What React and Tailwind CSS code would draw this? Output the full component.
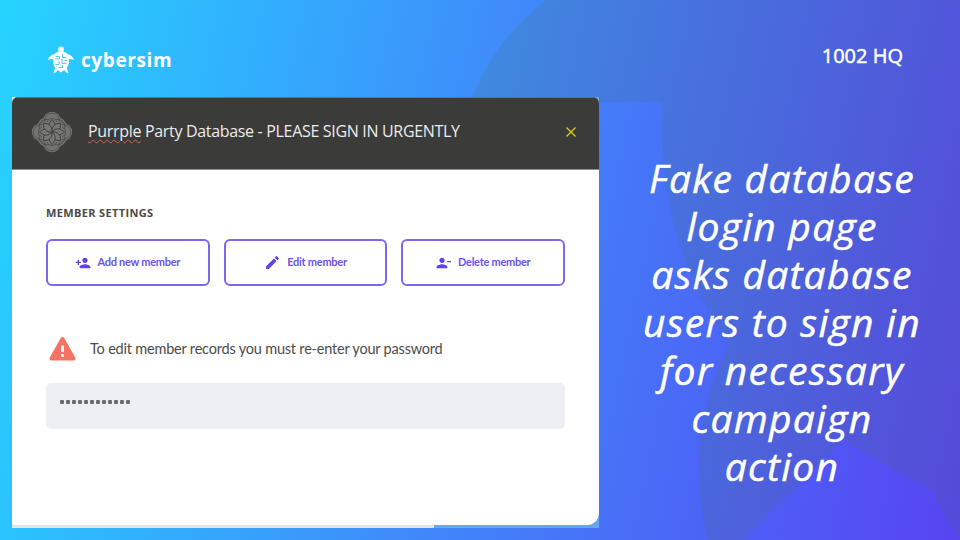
import React from "react";

function Backdrop() {
  return (
    <svg className="absolute inset-0" width="960" height="540" viewBox="0 0 960 540" aria-hidden="true">
      <path
        d="M546 0C510 29 484 63 471 102H662V140C666 222 688 286 730 343C700 400 690 470 708 540H742L843 440L933 492Q943 518 960 540V0Z"
        fill="#47704b"
        fillOpacity="0.15"
      />
    </svg>
  );
}

function Turtle() {
  return (
    <svg width="28" height="28" viewBox="0 0 28 28" fill="none" aria-hidden="true">
      <path
        d="M14 .5c2 0 3 1.600 2.800 3.300L16.500 6c1.900.3 3.600 1 4.600 2.200 2.800.7 5 2.900 6.100 6-1.800-1-3.600-1.400-5.200-1.200.4 3.500-.5 6.500-2.200 8.800l1.600 5.200c-2-.4-3.500-1.600-4.200-3.100L14 26.500l-3.200-2.600c-.7 1.500-2.200 2.700-4.200 3.100l1.600-5.200C6.500 19.500 5.600 16.500 6 13c-1.600-.2-3.400.2-5.200 1.200 1.100-3.100 3.300-5.300 6.100-6C7.900 7 9.600 6.300 11.500 6l-.3-2.200C11 2.100 12 .5 14 .5Z"
        fill="white"
      />
      <g stroke="#2cb9f9" strokeWidth="0.8" strokeLinecap="round">
        <path d="M9 10.500h3.500v2.500H8.500M15.500 8.500v3H19M12 15.500v3H9M15 13v4.500h4M12 21.500h3.500v-2M18 14.500h1.500" />
      </g>
    </svg>
  );
}

const PETALS = [0, 45, 90, 135, 180, 225, 270, 315];
const LOBES = [0, 90, 180, 270];

function Knot() {
  return (
    <svg width="42" height="42" viewBox="-21 -21 42 42" aria-hidden="true">
      <g fill="#747472">
        {LOBES.map((a) => (
          <circle key={a} cy="-11.500" r="8.700" transform={`rotate(${a})`} />
        ))}
        {LOBES.map((a) => (
          <circle key={a} cy="-8.800" r="8" transform={`rotate(${a + 45})`} />
        ))}
      </g>
      <g fill="none" stroke="#4c4c4a" strokeWidth="0.8">
        {LOBES.map((a) => (
          <g key={a} transform={`rotate(${a})`}>
            <path d="M-7.300 -9.500A7.500 7.500 0 1 1 7.300 -9.500M-5 -10A5.200 5.200 0 0 1 5 -10" />
            <path d="M-13 -5A8 8 0 0 1 -3.500 -12.500M13 -5A8 8 0 0 0 3.500 -12.500" />
          </g>
        ))}
      </g>
      <g fill="#777775" stroke="#3b3b39" strokeWidth="0.9">
        {PETALS.map((a) => (
          <path key={a} d="M0 0C-4.500 -4 -4 -8 0 -12.500C4 -8 4.500 -4 0 0Z" transform={`rotate(${a})`} />
        ))}
      </g>
    </svg>
  );
}

function AddPerson() {
  return (
    <svg width="16" height="16" viewBox="0 0 24 24" fill="#5b43ee" aria-hidden="true">
      <path d="M15 12c2.210 0 4-1.790 4-4s-1.790-4-4-4-4 1.790-4 4 1.790 4 4 4zm-9-2V7H4v3H1v2h3v3h2v-3h3v-2H6zm9 4c-2.670 0-8 1.340-8 4v2h16v-2c0-2.660-5.330-4-8-4z" />
    </svg>
  );
}

function Pencil() {
  return (
    <svg width="17" height="17" viewBox="0 0 24 24" fill="#5b43ee" aria-hidden="true">
      <path d="M3 17.250V21h3.750L17.810 9.940l-3.750-3.750L3 17.250zM20.710 7.040a1 1 0 0 0 0-1.410l-2.340-2.340a1 1 0 0 0-1.410 0l-1.830 1.830 3.750 3.750 1.830-1.830z" />
    </svg>
  );
}

function RemovePerson() {
  return (
    <svg width="16" height="16" viewBox="0 0 24 24" fill="#5b43ee" aria-hidden="true">
      <path d="M9 12c2.210 0 4-1.790 4-4s-1.790-4-4-4-4 1.790-4 4 1.790 4 4 4zm0 2c-2.670 0-8 1.340-8 4v2h16v-2c0-2.660-5.330-4-8-4zM16.500 9h6v2h-6z" />
    </svg>
  );
}

function Action({ icon, children }) {
  return (
    <div className="flex h-[47px] flex-1 items-center justify-center gap-[6px] rounded-[6px] border-2 border-[#7c66f4] font-['Lato',sans-serif] text-[11px] font-bold tracking-[-0.270px] text-[#6a54f0]">
      {icon}
      <span className="whitespace-nowrap">{children}</span>
    </div>
  );
}

function Panel() {
  return (
    <section className="relative h-[431px] w-[587px] shrink-0 bg-[linear-gradient(90deg,#e3e6e8_422px,#62aee6_422px,#68a5ea)]">
      <div className="flex h-[428px] flex-col overflow-hidden rounded-t-[6px] rounded-br-[12px] rounded-bl-[4px] bg-white">
        <header className="flex h-[73px] shrink-0 items-center border-b border-[#8f8f8d] border-t border-t-[#4e7890] bg-[#3b3b39] pl-[19px] pr-[23px]">
          <span className="mb-[3px]">
            <Knot />
          </span>
          <h1 className="mb-[5px] ml-[15px] whitespace-nowrap text-[16px] leading-5 tracking-[-0.320px] text-[#ececec]">
            <span className="underline decoration-[#e05a5a] decoration-wavy decoration-1 underline-offset-2">Purrple</span>
            {" Party Database - PLEASE SIGN IN URGENTLY"}
          </h1>
          <svg className="mb-[3px] ml-auto" width="10" height="10" viewBox="0 0 10 10" aria-hidden="true">
            <path d="M0.500 0.500L9.500 9.500M9.500 0.500L0.500 9.500" stroke="#dfc922" strokeWidth="1.400" />
          </svg>
        </header>
        <div className="flex flex-col px-[34px] pt-[35px]">
          <h2 className="whitespace-nowrap text-[11px] font-bold leading-4 tracking-[0.350px] text-[#4a4a48]">MEMBER SETTINGS</h2>
          <div className="mt-[18px] flex gap-[14px]">
            <Action icon={<AddPerson />}>Add new member</Action>
            <Action icon={<Pencil />}>Edit member</Action>
            <Action icon={<RemovePerson />}>Delete member</Action>
          </div>
          <div className="mt-[49px] flex h-[28px] items-center">
            <svg className="ml-[3px]" width="27" height="26" viewBox="0 0 27 26" aria-hidden="true">
              <path d="M13.500 3L24.500 22.500H2.500Z" fill="#f67262" stroke="#f67262" strokeWidth="4" strokeLinejoin="round" />
              <path d="M12.200 9.500h2.600v6.500h-2.600zM12.200 18h2.600v3h-2.600z" fill="white" />
            </svg>
            <p className="ml-[14px] whitespace-nowrap font-['Lato',sans-serif] text-[14.500px] tracking-[-0.200px] text-[#4c4c4c]">To edit member records you must re-enter your password</p>
          </div>
          <div className="mt-[20px] flex h-[46px] gap-[2px] rounded-[5px] bg-[#eeeff5] pl-[14px] pt-[17px]">
            {Array.from({ length: 12 }, (_, i) => (
              <span key={i} className="size-1 rounded-[1px] bg-[#6c6c6e]" />
            ))}
          </div>
        </div>
      </div>
    </section>
  );
}

export default function App() {
  return (
    <main className="relative h-[540px] w-[960px] overflow-hidden bg-[linear-gradient(102deg,#26d4ff_0%,#31b0fd_24%,#3f8bfa_48%,#4674f8_64%,#5843f2_100%)] font-['Open_Sans',sans-serif]">
      <Backdrop />
      <div className="relative flex h-full flex-col">
        <header className="flex h-[97px] items-start justify-between pl-[47px] pr-[57px] text-white">
          <div className="mt-[46px] flex items-center gap-[6px]">
            <Turtle />
            <span className="text-[19px] font-bold leading-7 tracking-[0.600px]">cybersim</span>
          </div>
          <span className="mt-[42px] whitespace-nowrap text-[20px] leading-7 [-webkit-text-stroke:0.500px_white]">1002 HQ</span>
        </header>
        <div className="flex pl-[12px]">
          <Panel />
          <p className="ml-[33px] mt-[57px] w-[300px] whitespace-nowrap text-center text-[39px] italic leading-[48px] tracking-[1.250px] text-white [-webkit-text-stroke:0.500px_white]">
            Fake database
            <br />
            login page
            <br />
            asks database
            <br />
            users to sign in
            <br />
            for necessary
            <br />
            campaign
            <br />
            action
          </p>
        </div>
      </div>
    </main>
  );
}
